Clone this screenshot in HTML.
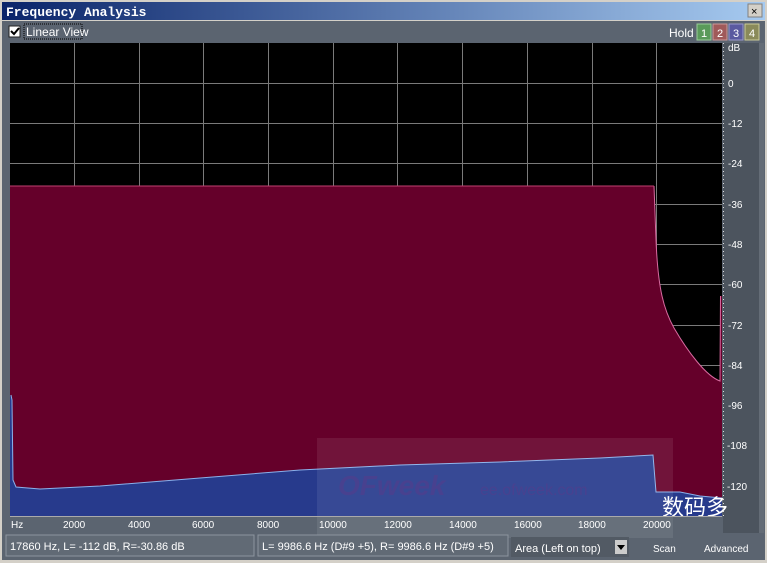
<!DOCTYPE html>
<html><head><style>
body{margin:0;width:767px;height:563px;overflow:hidden;background:#d4d0c8;font-family:"Liberation Sans",sans-serif}
</style></head><body>
<svg width="767" height="563" xmlns="http://www.w3.org/2000/svg" style="position:absolute;left:0;top:0">
<defs>
<linearGradient id="tb" x1="0" x2="1"><stop offset="0" stop-color="#0a246a"/><stop offset="1" stop-color="#a6caf0"/></linearGradient>
</defs>
<rect x="0" y="0" width="767" height="563" fill="#d4d0c8"/>
<rect x="2" y="2" width="763" height="18" fill="url(#tb)"/>
<text x="6" y="16" font-family="Liberation Mono" font-weight="bold" font-size="13" fill="#fff">Frequency Analysis</text>
<rect x="748" y="4" width="14" height="13" fill="#d4d0c8" stroke="#808080"/>
<text x="751" y="15" font-size="11" fill="#000">×</text>
<rect x="2" y="21" width="763" height="539" fill="#5b6470"/>
<rect x="723" y="43" width="36" height="490" fill="#4c545e"/>
<rect x="759" y="43" width="5" height="490" fill="#646c76"/>
<rect x="9" y="26" width="11" height="11" fill="#fff" stroke="#222"/>
<path d="M11 31 l3 3 l5 -6" stroke="#000" stroke-width="2" fill="none"/>
<rect x="24" y="24" width="58" height="15" fill="none" stroke="#000" stroke-dasharray="1,1"/>
<text x="26" y="36" font-size="12" fill="#fff">Linear View</text>
<text x="669" y="37" font-size="12" fill="#fff">Hold</text>
<rect x="697" y="24" width="14" height="16" fill="#5a9a5a" stroke="#9c9"/><text x="701" y="37" font-size="11" fill="#fff">1</text>
<rect x="713" y="24" width="14" height="16" fill="#a05a5a" stroke="#c99"/><text x="717" y="37" font-size="11" fill="#fff">2</text>
<rect x="729" y="24" width="14" height="16" fill="#5a5aa0" stroke="#99c"/><text x="733" y="37" font-size="11" fill="#fff">3</text>
<rect x="745" y="24" width="14" height="16" fill="#8a8a5a" stroke="#cc9"/><text x="749" y="37" font-size="11" fill="#fff">4</text>
<rect x="10" y="43" width="712" height="473" fill="#000"/>
<g stroke="#7a7a7a" stroke-width="1">
<path d="M74.5 43V516M139.5 43V516M203.5 43V516M268.5 43V516M333.5 43V516M397.5 43V516M462.5 43V516M527.5 43V516M592.5 43V516M656.5 43V516"/>
<path d="M10 83.5H722M10 123.5H722M10 163.5H722M10 204.5H722M10 244.5H722M10 284.5H722M10 325.5H722M10 365.5H722M10 405.5H722M10 445.5H722M10 486.5H722"/>
</g>
<path d="M10 186 H654 L656 240 C658 290 664 310 674 328 C688 352 706 376 720 381 L720.5 296 L722 296 V516 H10Z" fill="#65002a"/>
<path d="M654 186 L656 240 C658 290 664 310 674 328 C688 352 706 376 720 381 L720.5 296" stroke="#d86aa0" fill="none"/>
<path d="M10 186H654" stroke="#c04070"/>
<path d="M10 395 L12 400 L13 480 L16 487 L40 489 L100 486 L200 478 L300 470 L400 465 L500 462 L600 458 L653 455 L656 492 L680 492 L700 496 L722 498 V516 H10Z" fill="#273a8c"/>
<path d="M11 395 L12 400 L13 480 L16 487 L40 489 L100 486 L200 478 L300 470 L400 465 L500 462 L600 458 L653 455 L656 492 L680 492 L700 496 L722 498" stroke="#8ab0ea" fill="none"/>
<rect x="317" y="438" width="356" height="100" fill="#fff" opacity="0.08"/>
<text x="338" y="495" font-size="28" font-weight="bold" font-style="italic" fill="#5a3a8a" opacity="0.5">OFweek</text>
<text x="480" y="495" font-size="16" fill="#5a3a8a" opacity="0.5">ee.ofweek.com</text>
<text x="662" y="515" font-size="22" fill="#fff" font-family="Noto Sans CJK SC,sans-serif">数码多</text>
<path d="M723.5 43V516" stroke="#ddd" stroke-dasharray="1,3"/>
<g font-size="10" fill="#fff" font-family="Liberation Sans">
<text x="728" y="51">dB</text>
<text x="728" y="87">0</text><text x="728" y="127">-12</text><text x="728" y="167">-24</text><text x="728" y="208">-36</text><text x="728" y="248">-48</text><text x="728" y="288">-60</text><text x="728" y="329">-72</text><text x="728" y="369">-84</text><text x="728" y="409">-96</text><text x="727" y="449">-108</text><text x="727" y="490">-120</text>
</g>
<path d="M10 516.5H722" stroke="#aaa"/>
<g font-size="10" fill="#fff">
<text x="11" y="528">Hz</text>
<text x="63" y="528">2000</text><text x="128" y="528">4000</text><text x="192" y="528">6000</text><text x="257" y="528">8000</text><text x="319" y="528">10000</text><text x="384" y="528">12000</text><text x="449" y="528">14000</text><text x="514" y="528">16000</text><text x="578" y="528">18000</text><text x="643" y="528">20000</text>
</g>
<rect x="6" y="535" width="248" height="21" fill="#616a75" stroke="#8c949e"/>
<text x="10" y="550" font-size="11" fill="#fff">17860 Hz, L=  -112 dB, R=-30.86 dB</text>
<rect x="258" y="535" width="250" height="21" fill="#616a75" stroke="#8c949e"/>
<text x="262" y="550" font-size="11" fill="#fff">L= 9986.6 Hz (D#9 +5), R= 9986.6 Hz (D#9 +5)</text>
<rect x="511" y="537" width="118" height="20" fill="#525a64"/>
<text x="515" y="552" font-size="11" fill="#fff">Area (Left on top)</text>
<rect x="615" y="540" width="12" height="14" fill="#ccc"/>
<path d="M617 545h8l-4 5z" fill="#000"/>
<text x="653" y="552" font-size="10" fill="#fff">Scan</text>
<text x="704" y="552" font-size="10" fill="#fff">Advanced</text>
</svg>
</body></html>
